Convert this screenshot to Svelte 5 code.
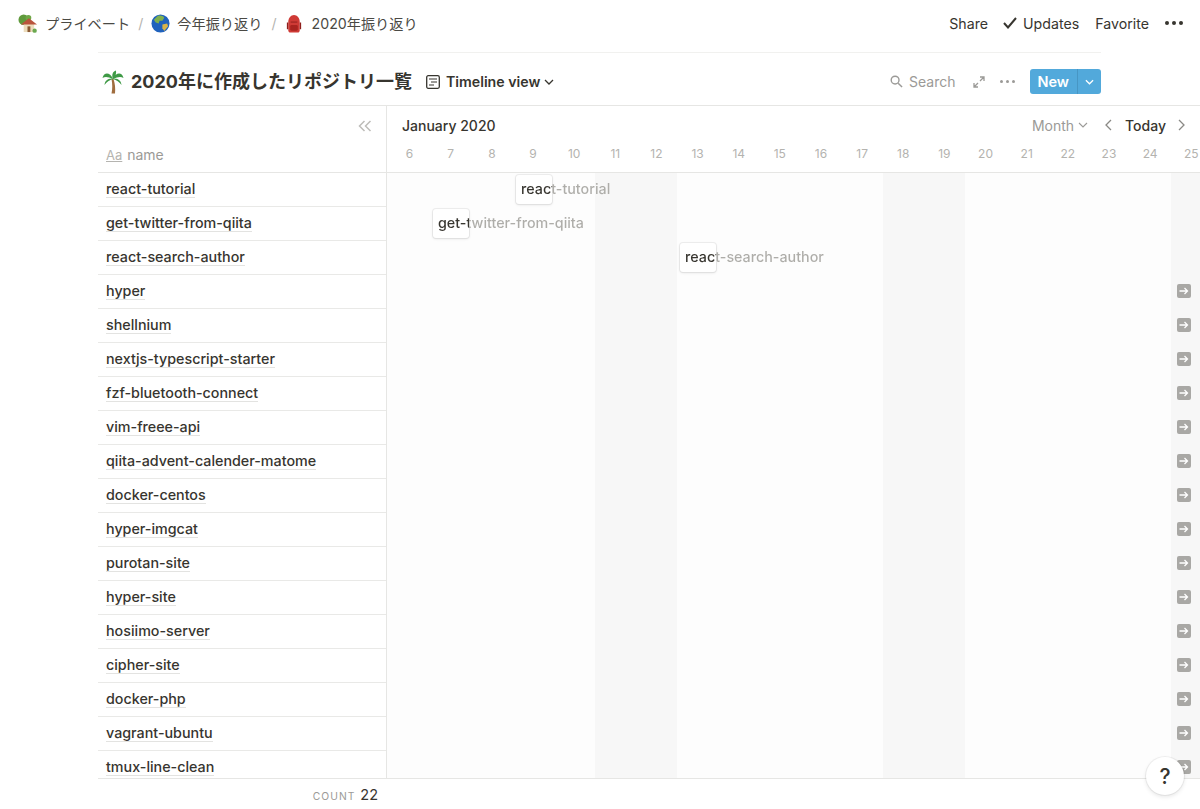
<script>
  const rows = [
    'react-tutorial', 'get-twitter-from-qiita', 'react-search-author', 'hyper', 'shellnium',
    'nextjs-typescript-starter', 'fzf-bluetooth-connect', 'vim-freee-api', 'qiita-advent-calender-matome',
    'docker-centos', 'hyper-imgcat', 'purotan-site', 'hyper-site', 'hosiimo-server', 'cipher-site',
    'docker-php', 'vagrant-ubuntu', 'tmux-line-clean'
  ];
  const days = [6, 7, 8, 9, 10, 11, 12, 13, 14, 15, 16, 17, 18, 19, 20, 21, 22, 23, 24, 25];
  const weekend = [11, 12, 18, 19, 25];
  const dayWidth = 41.15;

  // cards on the timeline: row index, left px inside the lane
  const cards = [
    { row: 0, left: 129, label: 'react-tutorial' },
    { row: 1, left: 46, label: 'get-twitter-from-qiita' },
    { row: 2, left: 293, label: 'react-search-author' }
  ];
</script>

<div class="page">
  <header class="topbar">
    <nav class="crumbs">
      <svg class="emoji house" viewBox="0 0 20 20">
        <circle cx="6" cy="6" r="5.500" fill="#5f9a3c" />
        <circle cx="11" cy="4" r="3" fill="#6fa846" />
        <rect x="6" y="10" width="11" height="9" fill="#ecdcbc" />
        <path d="M3 11l8.500-6.500L20 11z" fill="#b9543d" />
        <rect x="10" y="13" width="3" height="6" fill="#8a5a33" />
        <circle cx="17.500" cy="17.500" r="2.300" fill="#6aa84f" />
      </svg>
      <span>プライベート</span>
      <span class="slash first">/</span>
      <svg class="emoji" viewBox="0 0 20 20">
        <circle cx="10" cy="10" r="9.500" fill="#1f62bd" />
        <path d="M7 2c3-1 6 0 7 2l-2 3-3 0-1 3-3-1-2-3z" fill="#7fb04d" />
        <path d="M12 11l5-1 1 3-4 5-2-3z" fill="#d9b44a" />
      </svg>
      <span>今年振り返り</span>
      <span class="slash">/</span>
      <svg class="emoji pack" viewBox="0 0 16 20">
        <path d="M2 8c0-4 3-7 6-7s6 3 6 7v9c0 1.500-1 2.500-2 2.500H4c-1 0-2-1-2-2.500z" fill="#cf3a35" />
        <path d="M2 9H0.500v7H2zM14 9h1.500v7H14z" fill="#8f1f1c" />
        <rect x="4" y="11.500" width="8" height="6" rx="1.500" fill="#a9231f" />
        <path d="M4.500 8.500h7" stroke="#8f1f1c" stroke-width="1" />
      </svg>
      <span>2020年振り返り</span>
    </nav>
    <div class="actions">
      <span>Share</span>
      <span class="updates">
        <svg class="check" viewBox="0 0 14 12">
          <path d="M1 6l4 4.500 8-9.500" fill="none" stroke="#37352f" stroke-width="2" />
        </svg>
        Updates
      </span>
      <span>Favorite</span>
      <span class="dots"><i></i><i></i><i></i></span>
    </div>
  </header>

  <section class="board">
    <div class="titlebar">
      <div class="title-left">
        <svg class="palm" viewBox="0 0 22 24">
          <path d="M9.500 9c1 5 1 10 0 14.500h3.500c.5-5 0-10-1.500-14.500z" fill="#a06d3f" />
          <path d="M11 9C8 2 2 2 0.500 8c3-2 6-1 10.500 1zM11 9c3-7 9-7 10.500-1-3-2-6-1-10.500 1zM11 9C8 8 3 9 2.500 15c2-3 5-5 8.500-6zM11 9c3-1 8 0 8.500 6-2-3-5-5-8.500-6zM11 9C9.500 5 10.500 1.500 14 0.500c.5 3-.5 6-3 8.500z" fill="#3f9a46" />
        </svg>
        <h1>2020年に作成したリポジトリ一覧</h1>
        <span class="view">
          <svg class="view-icon" viewBox="0 0 14 14">
            <rect x="0.700" y="0.700" width="12.600" height="12.600" rx="1.500" fill="none" stroke="#37352f" stroke-width="1.300" />
            <path d="M3 4h8M5 7h6M3 10h5" stroke="#37352f" stroke-width="1.200" />
          </svg>
          Timeline view
          <svg class="caret" viewBox="0 0 10 6">
            <path d="M1 1l4 4 4-4" fill="none" stroke="#37352f" stroke-width="1.300" />
          </svg>
        </span>
      </div>
      <div class="tools">
        <span class="search">
          <svg class="search-icon" viewBox="0 0 14 14">
            <circle cx="5.500" cy="5.500" r="4.200" fill="none" stroke="#9b9a97" stroke-width="1.500" />
            <path d="M8.800 8.800l4.200 4.200" stroke="#9b9a97" stroke-width="1.600" />
          </svg>
          Search
        </span>
        <svg class="expand" viewBox="0 0 12 12">
          <path d="M7 1h4v4M11 1L7 5M5 11H1V7M1 11l4-4" fill="none" stroke="#9b9a97" stroke-width="1.300" />
        </svg>
        <span class="dots small"><i></i><i></i><i></i></span>
        <span class="new">
          <span class="new-label">New</span>
          <span class="new-arrow">
            <svg viewBox="0 0 10 6"><path d="M1 1l4 4 4-4" fill="none" stroke="#fff" stroke-width="1.400" /></svg>
          </span>
        </span>
      </div>
    </div>

    <div class="timeline">
      <aside class="names">
        <div class="names-head">
          <svg class="collapse" viewBox="0 0 14 12">
            <path d="M6.500 1L1.500 6l5 5M12.500 1l-5 5 5 5" fill="none" stroke="#bdbcb8" stroke-width="1.500" />
          </svg>
          <div class="name-col"><span class="aa">Aa</span> name</div>
        </div>
        {#each rows as row}
          <div class="name-row"><span>{row}</span></div>
        {/each}
      </aside>

      <div class="lane">
        <div class="lane-head">
          <div class="month-row">
            <span class="month">January 2020</span>
            <div class="pager">
              <span class="range">Month
                <svg class="caret" viewBox="0 0 10 6"><path d="M1 1l4 4 4-4" fill="none" stroke="#9b9a97" stroke-width="1.100" /></svg>
              </span>
              <svg class="chev" viewBox="0 0 7 12"><path d="M6 1L1 6l5 5" fill="none" stroke="#8a8985" stroke-width="1.300" /></svg>
              <span class="today">Today</span>
              <svg class="chev" viewBox="0 0 7 12"><path d="M1 1l5 5-5 5" fill="none" stroke="#8a8985" stroke-width="1.300" /></svg>
            </div>
          </div>
          <div class="day-row">
            {#each days as d}
              <span class="day" style="width: {dayWidth}px">{d}</span>
            {/each}
          </div>
        </div>
        <div class="lane-body">
          <div class="columns">
            {#each days as d}
              <div class="col" class:weekend={weekend.includes(d)} style="width: {dayWidth}px"></div>
            {/each}
          </div>
          {#each cards as c}
            <div class="card-line" style="left: {c.left}px; top: {c.row * 34 + 2}px">
              <span class="card"></span>
              <span class="label">{c.label}</span>
            </div>
          {/each}
          {#each rows.slice(3) as row, i}
            <span class="jump" style="top: {(i + 3) * 34 + 11}px">
              <svg viewBox="0 0 10 8"><path d="M0.500 4h8M5.500 1l3 3-3 3" fill="none" stroke="#fff" stroke-width="1.300" /></svg>
            </span>
          {/each}
        </div>
      </div>
    </div>

    <footer class="count">
      <span class="count-label">COUNT</span>
      <span class="count-value">22</span>
    </footer>
  </section>

  <button class="help">?</button>
</div>

<style>
  :global(body) {
    margin: 0;
    background: #fff;
  }

  .page {
    position: relative;
    width: 1200px;
    height: 809px;
    overflow: hidden;
    font-family: Inter, 'Noto Sans CJK JP', sans-serif;
    font-size: 14px;
    color: #37352f;
  }

  .topbar {
    display: flex;
    justify-content: space-between;
    align-items: center;
    height: 46px;
    padding: 0 17px 0 18px;
    box-sizing: border-box;
  }

  .crumbs {
    display: flex;
    align-items: center;
    font-size: 14.200px;
    color: #4a4944;
  }

  .emoji {
    width: 19px;
    height: 19px;
    margin-right: 7px;
  }

  .emoji.house {
    margin-right: 8px;
  }

  .emoji.pack {
    width: 16px;
    margin-right: 10px;
  }

  .slash {
    margin: 0 9px;
    color: #b5b4b0;
  }

  .slash.first {
    margin: 0 8px;
  }

  .actions {
    display: flex;
    align-items: center;
    gap: 16px;
    font-size: 14.200px;
  }

  .updates {
    display: flex;
    align-items: center;
    gap: 6px;
    margin-left: -1px;
  }

  .check {
    width: 14px;
    height: 12px;
  }

  .dots {
    display: flex;
    gap: 3px;
  }

  .dots i {
    width: 4px;
    height: 4px;
    border-radius: 50%;
    background: #37352f;
  }

  .dots.small i {
    width: 3px;
    height: 3px;
    background: #9b9a97;
  }

  .board {
    margin-left: 98px;
  }

  .titlebar {
    display: flex;
    justify-content: space-between;
    align-items: center;
    width: 1003px;
    height: 53px;
    margin-top: 6px;
    border-top: 1px solid #f1f1ef;
    box-sizing: border-box;
    padding: 5px 0 0 4px;
  }

  .title-left {
    display: flex;
    align-items: center;
  }

  .palm {
    width: 22px;
    height: 24px;
    margin-right: 7px;
  }

  h1 {
    margin: 0;
    font-size: 18px;
    font-weight: 700;
    line-height: 24px;
  }

  .view {
    display: flex;
    align-items: center;
    margin-left: 14px;
    font-weight: 600;
    font-size: 14.200px;
  }

  .view-icon {
    width: 14px;
    height: 14px;
    margin-right: 6px;
  }

  .caret {
    width: 10px;
    height: 6px;
    margin-left: 4px;
  }

  .tools {
    display: flex;
    align-items: center;
    color: #9b9a97;
  }

  .search {
    display: flex;
    align-items: center;
    gap: 6px;
    font-size: 14px;
  }

  .search-icon {
    width: 13px;
    height: 13px;
  }

  .expand {
    width: 12px;
    height: 12px;
    margin-left: 18px;
  }

  .tools .dots.small {
    margin-left: 15px;
  }

  .new {
    display: flex;
    height: 25px;
    margin-left: 15px;
    border-radius: 3px;
    background: #52a9db;
    color: #fff;
    font-weight: 600;
  }

  .new-label {
    display: flex;
    align-items: center;
    padding: 0 8px 0 7px;
    font-size: 14.500px;
    border-right: 1px solid #4796c4;
  }

  .new-arrow {
    display: flex;
    align-items: center;
    justify-content: center;
    width: 23px;
  }

  .new-arrow svg {
    width: 9px;
    height: 6px;
  }

  .timeline {
    display: flex;
    height: 672px;
    border-top: 1px solid #e6e6e4;
    border-bottom: 1px solid #e6e6e4;
    overflow: hidden;
  }

  .names {
    flex: none;
    width: 288px;
    border-right: 1px solid #e6e6e4;
    background: #fff;
  }

  .names-head {
    display: flex;
    flex-direction: column;
    height: 67px;
    padding: 9px 14px 0 8px;
    border-bottom: 1px solid #e6e6e4;
    box-sizing: border-box;
  }

  .collapse {
    align-self: flex-end;
    width: 14px;
    height: 12px;
    margin-top: 5px;
  }

  .name-col {
    margin-top: 14px;
    color: #9b9a97;
    font-size: 14px;
  }

  .aa {
    font-size: 13px;
    color: #b5b4b0;
    text-decoration: underline;
    margin-right: 1px;
  }

  .name-row {
    display: flex;
    align-items: center;
    height: 34px;
    padding: 0 0 2px 8px;
    border-bottom: 1px solid #e9e9e7;
    box-sizing: border-box;
    font-weight: 500;
    font-size: 14.300px;
  }

  .name-row span {
    border-bottom: 1px solid #e3e3e1;
    line-height: 17px;
  }

  .lane {
    flex: 1;
    min-width: 0;
    overflow: hidden;
  }

  .lane-head {
    height: 67px;
    border-bottom: 1px solid #e6e6e4;
    box-sizing: border-box;
  }

  .month-row {
    display: flex;
    justify-content: space-between;
    align-items: center;
    height: 38px;
    padding: 0 15px 0 15px;
  }

  .month {
    font-weight: 500;
    font-size: 14px;
  }

  .pager {
    display: flex;
    align-items: center;
  }

  .range {
    display: flex;
    align-items: center;
    color: #9b9a97;
    font-size: 14px;
    margin-right: 17px;
  }

  .chev {
    width: 7px;
    height: 12px;
  }

  .today {
    margin: 0 12px 0 13px;
    font-weight: 500;
    font-size: 14px;
  }

  .day-row {
    display: flex;
    width: 840px;
    margin-top: 2px;
    padding-left: 2px;
  }

  .day {
    flex: none;
    text-align: center;
    font-size: 12px;
    line-height: 15px;
    color: #b4b3af;
  }

  .lane-body {
    position: relative;
    height: 606px;
    background: #fdfdfd;
  }

  .columns {
    position: absolute;
    top: 0;
    bottom: 0;
    left: 2px;
    display: flex;
  }

  .col {
    flex: none;
  }

  .col.weekend {
    background: #f7f7f7;
  }

  .card-line {
    position: absolute;
    display: flex;
    align-items: center;
    height: 29px;
    font-weight: 500;
    font-size: 14.300px;
    white-space: nowrap;
  }

  .card {
    position: absolute;
    left: 0;
    top: 0;
    width: 36px;
    height: 29px;
    border-radius: 3px;
    background: #fff;
    box-shadow: 0 0 0 1px rgba(15, 15, 15, 0.06), 0 1px 3px rgba(15, 15, 15, 0.1);
  }

  /* dark while over the card, grey past its edge */
  .label {
    position: relative;
    margin: -2px 0 0 5px;
    background: linear-gradient(90deg, #37352f 31px, #aeada9 31px);
    -webkit-background-clip: text;
    background-clip: text;
    color: transparent;
  }

  .jump {
    position: absolute;
    right: 9px;
    display: flex;
    align-items: center;
    justify-content: center;
    width: 14px;
    height: 14px;
    margin-top: -2px;
    border-radius: 2px;
    background: #a9a8a5;
  }

  .jump svg {
    width: 10px;
    height: 8px;
  }

  .count {
    display: flex;
    justify-content: flex-end;
    align-items: baseline;
    gap: 5px;
    width: 280px;
    padding-top: 7px;
  }

  .count-label {
    font-size: 10.300px;
    letter-spacing: 1px;
    color: #9b9a97;
  }

  .count-value {
    font-size: 14.500px;
  }

  .help {
    position: absolute;
    left: 1146px;
    top: 757px;
    width: 38px;
    height: 38px;
    border: none;
    border-radius: 50%;
    background: #fff;
    box-shadow: 0 0 0 1px rgba(15, 15, 15, 0.05), 0 2px 4px rgba(15, 15, 15, 0.1);
    font-family: Inter, sans-serif;
    font-size: 21px;
    font-weight: 500;
    color: #37352f;
    padding: 0;
  }
</style>
